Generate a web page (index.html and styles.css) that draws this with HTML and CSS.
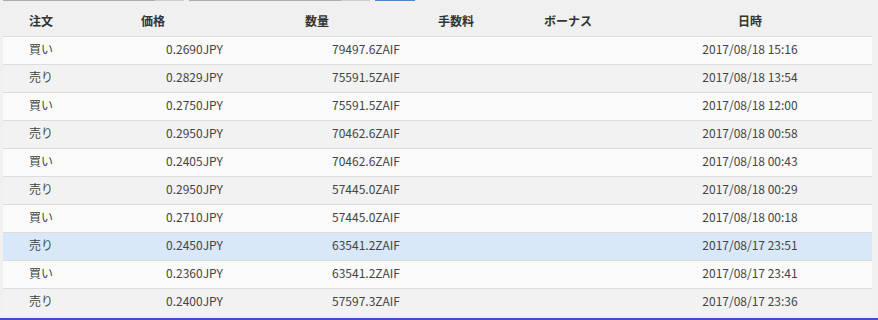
FILE: index.html
```html
<!DOCTYPE html>
<html lang="ja">
<head>
<meta charset="utf-8">
<link rel="stylesheet" href="styles.css">
</head>
<body>
<div class="controls">
  <div class="ctl ctl-a"><span class="dark"></span><span class="light"></span></div>
  <div class="ctl ctl-b"><span class="dark"></span><span class="light"></span></div>
  <div class="ctl ctl-btn"></div>
</div>
<div class="table">
  <div class="row head">
    <div class="c c1">注文</div><div class="c c2">価格</div><div class="c c3">数量</div><div class="c c4">手数料</div><div class="c c5">ボーナス</div><div class="c c6">日時</div>
  </div>
  <div class="row odd"><div class="c c1">買い</div><div class="c c2">0.2690JPY</div><div class="c c3">79497.6ZAIF</div><div class="c c4"></div><div class="c c5"></div><div class="c c6">2017/08/18 15:16</div></div>
  <div class="row even"><div class="c c1">売り</div><div class="c c2">0.2829JPY</div><div class="c c3">75591.5ZAIF</div><div class="c c4"></div><div class="c c5"></div><div class="c c6">2017/08/18 13:54</div></div>
  <div class="row odd"><div class="c c1">買い</div><div class="c c2">0.2750JPY</div><div class="c c3">75591.5ZAIF</div><div class="c c4"></div><div class="c c5"></div><div class="c c6">2017/08/18 12:00</div></div>
  <div class="row even"><div class="c c1">売り</div><div class="c c2">0.2950JPY</div><div class="c c3">70462.6ZAIF</div><div class="c c4"></div><div class="c c5"></div><div class="c c6">2017/08/18 00:58</div></div>
  <div class="row odd"><div class="c c1">買い</div><div class="c c2">0.2405JPY</div><div class="c c3">70462.6ZAIF</div><div class="c c4"></div><div class="c c5"></div><div class="c c6">2017/08/18 00:43</div></div>
  <div class="row even"><div class="c c1">売り</div><div class="c c2">0.2950JPY</div><div class="c c3">57445.0ZAIF</div><div class="c c4"></div><div class="c c5"></div><div class="c c6">2017/08/18 00:29</div></div>
  <div class="row odd"><div class="c c1">買い</div><div class="c c2">0.2710JPY</div><div class="c c3">57445.0ZAIF</div><div class="c c4"></div><div class="c c5"></div><div class="c c6">2017/08/18 00:18</div></div>
  <div class="row sel"><div class="c c1">売り</div><div class="c c2">0.2450JPY</div><div class="c c3">63541.2ZAIF</div><div class="c c4"></div><div class="c c5"></div><div class="c c6">2017/08/17 23:51</div></div>
  <div class="row odd"><div class="c c1">買い</div><div class="c c2">0.2360JPY</div><div class="c c3">63541.2ZAIF</div><div class="c c4"></div><div class="c c5"></div><div class="c c6">2017/08/17 23:41</div></div>
  <div class="row even"><div class="c c1">売り</div><div class="c c2">0.2400JPY</div><div class="c c3">57597.3ZAIF</div><div class="c c4"></div><div class="c c5"></div><div class="c c6">2017/08/17 23:36</div></div>
</div>
<div class="bottom-line"></div>
</body>
</html>
```
FILE: styles.css
```css
html, body {
  margin: 0;
  padding: 0;
  background: #f0f0f0;
  font-family: "Noto Sans CJK JP", "Noto Sans", sans-serif;
  font-size: 12px;
  color: #444;
}
.controls {
  display: flex;
  height: 1px;
  padding-left: 3px;
}
.ctl {
  display: flex;
  height: 1px;
}
.ctl-a { width: 181px; margin-right: 5px; }
.ctl-b { width: 181px; margin-right: 5px; }
.ctl .dark { width: 152px; background: #ababab; }
.ctl .light { flex: 1; background: #cfcfcf; }
.ctl-btn { width: 40px; background: #4a86c8; }
.table {
  width: 869px;
  margin-left: 3px;
}
.row {
  display: grid;
  grid-template-columns: 128px 164px 133px 106px 106px 232px;
  height: 27px;
  line-height: 23px;
  border-top: 1px solid #dcdcdc;
  white-space: nowrap;
}
.row.head {
  height: 35px;
  line-height: 39px;
  border-top: 0;
  font-weight: bold;
  color: #333;
  background: #f0f0f0;
}
.row.odd { background: #fafafa; }
.row.even { background: #f2f2f2; }
.row.sel { background: #d9e8f9; }
.c1 { padding-left: 26px; }
.c2 { padding-left: 35px; }
.c3 { padding-left: 37px; }
.head .c2, .head .c3, .head .c4, .head .c5 { padding-left: 10px; }
.c6 { text-align: center; padding-right: 12px; }
.bottom-line {
  margin-top: 2px;
  height: 2px;
  background: #3f4fbf;
}
```
